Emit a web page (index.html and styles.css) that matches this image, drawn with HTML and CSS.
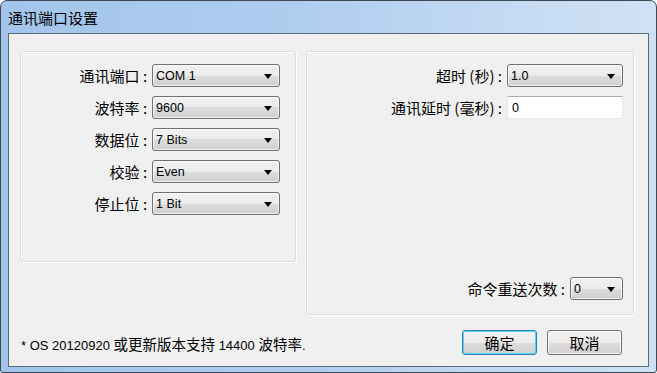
FILE: index.html
```html
<!DOCTYPE html>
<html lang="zh-CN">
<head>
    <meta charset="UTF-8">
    <title>通讯端口设置</title>
    <link rel="stylesheet" href="styles.css">
</head>
<body>
    <div class="window">
        <div class="titlebar">通讯端口设置</div>

        <div class="client">
            <div class="groups">
                <div class="group group-left">
                    <div class="row">
                        <span class="label">通讯端口 :</span>
                        <div class="combo combo-wide"><span>COM 1</span><i class="arrow"></i></div>
                    </div>
                    <div class="row">
                        <span class="label">波特率 :</span>
                        <div class="combo combo-wide"><span>9600</span><i class="arrow"></i></div>
                    </div>
                    <div class="row">
                        <span class="label">数据位 :</span>
                        <div class="combo combo-wide"><span>7 Bits</span><i class="arrow"></i></div>
                    </div>
                    <div class="row">
                        <span class="label">校验 :</span>
                        <div class="combo combo-wide"><span>Even</span><i class="arrow"></i></div>
                    </div>
                    <div class="row">
                        <span class="label">停止位 :</span>
                        <div class="combo combo-wide"><span>1 Bit</span><i class="arrow"></i></div>
                    </div>
                </div>

                <div class="group group-right">
                    <div class="row">
                        <span class="label">超时 (秒) :</span>
                        <div class="combo combo-mid"><span>1.0</span><i class="arrow"></i></div>
                    </div>
                    <div class="row">
                        <span class="label">通讯延时 (毫秒) :</span>
                        <div class="textbox">0</div>
                    </div>
                    <div class="row row-bottom">
                        <span class="label">命令重送次数 :</span>
                        <div class="combo combo-small"><span>0</span><i class="arrow"></i></div>
                    </div>
                </div>
            </div>

            <div class="footer">
                <span class="note">* OS 20120920 <span class="cjk">或更新版本支持</span> 14400 <span class="cjk">波特率</span>.</span>
                <div class="buttons">
                    <button class="btn btn-default">确定</button>
                    <button class="btn">取消</button>
                </div>
            </div>
        </div>
    </div>
</body>
</html>
```

FILE: styles.css
```css
* { box-sizing: border-box; }
html, body { margin: 0; padding: 0; }
body { width: 657px; height: 373px; overflow: hidden; background: #fff;
       font-family: "Liberation Sans", "Noto Sans CJK SC", sans-serif; font-size: 12px; color: #000; }

.window { width: 657px; height: 373px; display: flex; flex-direction: column;
          border: 1px solid #3d4854; border-radius: 7px 7px 3px 3px;
          background: linear-gradient(90deg, #a3c5eb 0%, #aecdef 45%, #c6dbf3 80%, #cfe1f5 100%); }
.titlebar { height: 32px; padding: 5px 0 0 7px; font-size: 15px; line-height: 24px;
            font-family: "Noto Sans CJK SC", sans-serif; color: #000; }

.client { flex: 1; margin: 0 7px 5px 7px; border: 1px solid #5c6979; background: #f0f0f0;
          padding: 17px 14px 0 11px; display: flex; flex-direction: column; }

.groups { display: flex; gap: 10px; align-items: flex-start; }
.group { border: 1px solid #d5dfe5; border-radius: 3px; box-shadow: inset 1px 1px 0 #fff, 1px 1px 0 #fff;
         display: flex; flex-direction: column; gap: 9px; padding-top: 12px; }
.group-left { width: 277px; height: 211px; padding-right: 15px; }
.group-right { width: 329px; height: 264px; padding-right: 10px; padding-bottom: 14px; }

.row { display: flex; justify-content: flex-end; align-items: center; height: 23px; }
.row-bottom { margin-top: auto; }
.label { font-family: "Noto Sans CJK SC", sans-serif; font-size: 15px; margin-right: 5px; white-space: nowrap; }

.combo { position: relative; height: 23px; border: 1px solid #707070; border-radius: 3px;
         background: linear-gradient(#f2f2f2 0%, #ebebeb 50%, #dddddd 50%, #cfcfcf 100%);
         box-shadow: inset 0 0 0 1px rgba(255,255,255,0.7);
         display: flex; align-items: center; padding-left: 3px; padding-top: 2px; line-height: 19px; }
.combo span { font-size: 12.5px; }
.combo .arrow { position: absolute; right: 7px; top: 9px; width: 0; height: 0;
                border-left: 4.5px solid transparent; border-right: 4.5px solid transparent; border-top: 5px solid #000; }
.combo-wide { width: 128px; }
.combo-mid { width: 116px; }
.combo-small { width: 53px; }

.textbox { width: 116px; height: 23px; background: #fff; border: 1px solid #e3e9ef; border-top-color: #abadb3;
           padding-left: 4px; padding-top: 1px; line-height: 21px; font-size: 12.5px; }

.footer { display: flex; justify-content: space-between; align-items: center; margin-top: 15px; padding-right: 12px; }
.note { font-size: 13px; padding-left: 1px; padding-top: 2px; }
.note .cjk { font-family: "Noto Sans CJK SC", sans-serif; font-size: 14.5px; }
.buttons { display: flex; gap: 10px; }
.btn { width: 75px; height: 25px; border: 1px solid #707070; border-radius: 3px; padding: 0;
       background: linear-gradient(#f2f2f2 0%, #ebebeb 50%, #dddddd 50%, #cfcfcf 100%);
       box-shadow: inset 0 0 0 1px rgba(255,255,255,0.8);
       font-family: "Noto Sans CJK SC", sans-serif; font-size: 15px; color: #000; line-height: 22px; }
.btn-default { border-color: #3c7fb1; box-shadow: inset 0 0 0 1px #48d8fb; }
```
